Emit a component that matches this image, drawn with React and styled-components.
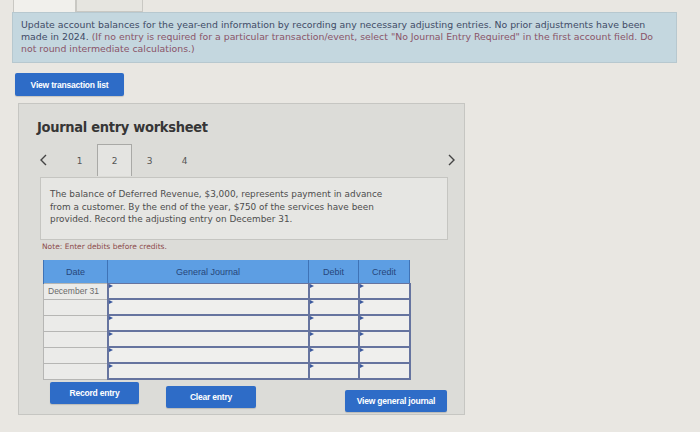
import styled, { createGlobalStyle } from "styled-components";

const GlobalStyle = createGlobalStyle`
  body {
    margin: 0;
    background: #e8e6e1;
    font-family: "DejaVu Sans", Verdana, sans-serif;
  }
`;

const Page = styled.div`
  width: 700px;
  height: 432px;
  overflow: hidden;
  background: #e9e7e2;
`;

const TabStrip = styled.div`
  display: flex;
  height: 12px;
  padding-left: 13px;
`;

const Tab = styled.div`
  width: ${(p) => p.$w}px;
  height: 12px;
  box-sizing: border-box;
  background: ${(p) => (p.$active ? "#f1f0ec" : "#e6e5e0")};
  border: 1px solid #c9c8c3;
  border-top: none;
  border-bottom: ${(p) => (p.$active ? "none" : "1px solid #c9c8c3")};
`;

const Banner = styled.div`
  margin: 0 23px 0 12px;
  height: 51px;
  box-sizing: border-box;
  padding: 6px 8px 0 8px;
  background: #c4d7df;
  border: 1px solid #b7c8cf;
  font-size: 9.35px;
  line-height: 12px;
  color: #3f4b66;
`;

const Hint = styled.span`
  color: #8a5468;
`;

const ActionButton = styled.button`
  display: block;
  width: ${(p) => p.$w}px;
  height: ${(p) => p.$h || 22}px;
  padding: 0;
  border: none;
  border-radius: 2px;
  background: #2e6cc7;
  color: #fff;
  font-family: "Liberation Sans", Arial, sans-serif;
  font-weight: bold;
  font-size: 8.5px;
  letter-spacing: -0.2px;
  box-shadow: 0 1px 1px rgba(0, 0, 0, 0.15);
`;

const TopAction = styled.div`
  margin: 10px 0 0 15px;
`;

const Panel = styled.section`
  margin: 7px 0 0 18px;
  width: 447px;
  height: 312px;
  box-sizing: border-box;
  background: #dcdcd8;
  border: 1px solid #c6c6c2;
`;

const Title = styled.h2`
  margin: 14px 0 0 18px;
  font-family: "DejaVu Sans Condensed", "DejaVu Sans", sans-serif;
  font-size: 14.5px;
  line-height: 18px;
  font-weight: bold;
  color: #363636;
  letter-spacing: -0.3px;
`;

const Pager = styled.div`
  display: flex;
  align-items: stretch;
  height: 32px;
  margin-top: 8px;
  padding: 0 8px 0 20px;
`;

const Arrow = styled.div`
  width: ${(p) => p.$w}px;
  display: flex;
  align-items: center;
  justify-content: ${(p) => (p.$right ? "flex-end" : "flex-start")};
`;

const PageCell = styled.div`
  width: 35px;
  box-sizing: border-box;
  display: flex;
  align-items: center;
  justify-content: center;
  font-size: 9px;
  color: #555;
  background: ${(p) => (p.$active ? "#e4e4e1" : "transparent")};
  border: 1px solid ${(p) => (p.$active ? "#a9a9a6" : "transparent")};
  border-bottom: none;
`;

const Spacer = styled.div`
  flex: 1;
`;

const Prompt = styled.div`
  margin: 1px 0 0 21px;
  width: 408px;
  height: 63px;
  box-sizing: border-box;
  padding: 10px 55px 0 9px;
  background: #e6e6e3;
  border: 1px solid #c5c5c1;
  font-size: 8.9px;
  line-height: 12.5px;
  color: #4d4d4d;
`;

const Note = styled.p`
  margin: 2px 0 0 23px;
  font-size: 7.5px;
  line-height: 9px;
  color: #8c4b4b;
`;

const JournalTable = styled.table`
  margin: 9px 0 0 24px;
  border-collapse: collapse;
  table-layout: fixed;
  width: 362px;
`;

const HeadCell = styled.th`
  width: ${(p) => p.$w}px;
  height: 23px;
  padding: 0;
  background: #5d9ee3;
  border-left: 1px solid #3f73b6;
  border-right: 1px solid #3f73b6;
  font-family: "Liberation Sans", Arial, sans-serif;
  font-weight: normal;
  font-size: 9px;
  color: #27467a;
  vertical-align: middle;
`;

const DateCell = styled.td`
  height: 14px;
  padding: 0 0 0 4px;
  background: #ebebe9;
  border: 1px solid #b6b6b4;
  font-family: "Liberation Sans", Arial, sans-serif;
  font-size: 8.5px;
  line-height: 12px;
  color: #6a6a6a;
  white-space: nowrap;
`;

const InputCell = styled.td`
  position: relative;
  height: 14px;
  padding: 0;
  background: #efefed;
  border: 2px solid #66749f;
  border-top-width: ${(p) => (p.$first ? 1 : 2)}px;

  &::before {
    content: "";
    position: absolute;
    left: 0;
    top: 0;
    border-left: 4px solid #3c5a9e;
    border-top: 2px solid transparent;
    border-bottom: 2px solid transparent;
  }
`;

const ButtonRow = styled.div`
  display: flex;
  align-items: flex-start;
  margin-top: 2px;
  padding: 0 17px 0 31px;
  gap: 27px;
`;

const Drop = styled.div`
  padding-top: ${(p) => p.$y}px;
  margin-left: ${(p) => (p.$push ? "auto" : "0")};
`;

const Chevron = ({ right }) => (
  <svg width="9" height="12" viewBox="0 0 9 12">
    <path
      d={right ? "M2 1 L7 6 L2 11" : "M7 1 L2 6 L7 11"}
      fill="none"
      stroke="#444"
      strokeWidth="1.4"
    />
  </svg>
);

const rows = ["December 31", "", "", "", "", ""];

export default function App() {
  return (
    <Page>
      <GlobalStyle />
      <TabStrip>
        <Tab $w={63} $active />
        <Tab $w={67} />
      </TabStrip>
      <Banner>
        Update account balances for the year-end information by recording any necessary adjusting entries. No prior
        adjustments have been made in 2024.{" "}
        <Hint>
          (If no entry is required for a particular transaction/event, select "No Journal Entry Required" in the first
          account field. Do not round intermediate calculations.)
        </Hint>
      </Banner>
      <TopAction>
        <ActionButton $w={109} $h={23}>View transaction list</ActionButton>
      </TopAction>
      <Panel>
        <Title>Journal entry worksheet</Title>
        <Pager>
          <Arrow $w={23}>
            <Chevron />
          </Arrow>
          <PageCell>1</PageCell>
          <PageCell $active>2</PageCell>
          <PageCell>3</PageCell>
          <PageCell>4</PageCell>
          <Spacer />
          <Arrow $w={20} $right>
            <Chevron right />
          </Arrow>
        </Pager>
        <Prompt>
          The balance of Deferred Revenue, $3,000, represents payment in advance from a customer. By the end of the
          year, $750 of the services have been provided. Record the adjusting entry on December 31.
        </Prompt>
        <Note>Note: Enter debits before credits.</Note>
        <JournalTable>
          <thead>
            <tr>
              <HeadCell $w={63}>Date</HeadCell>
              <HeadCell $w={200}>General Journal</HeadCell>
              <HeadCell $w={49}>Debit</HeadCell>
              <HeadCell $w={50}>Credit</HeadCell>
            </tr>
          </thead>
          <tbody>
            {rows.map((d, i) => (
              <tr key={i}>
                <DateCell>{d}</DateCell>
                <InputCell $first={i === 0} />
                <InputCell $first={i === 0} />
                <InputCell $first={i === 0} />
              </tr>
            ))}
          </tbody>
        </JournalTable>
        <ButtonRow>
          <ActionButton $w={89}>Record entry</ActionButton>
          <Drop $y={4}>
            <ActionButton $w={90}>Clear entry</ActionButton>
          </Drop>
          <Drop $y={8} $push>
            <ActionButton $w={102}>View general journal</ActionButton>
          </Drop>
        </ButtonRow>
      </Panel>
    </Page>
  );
}
